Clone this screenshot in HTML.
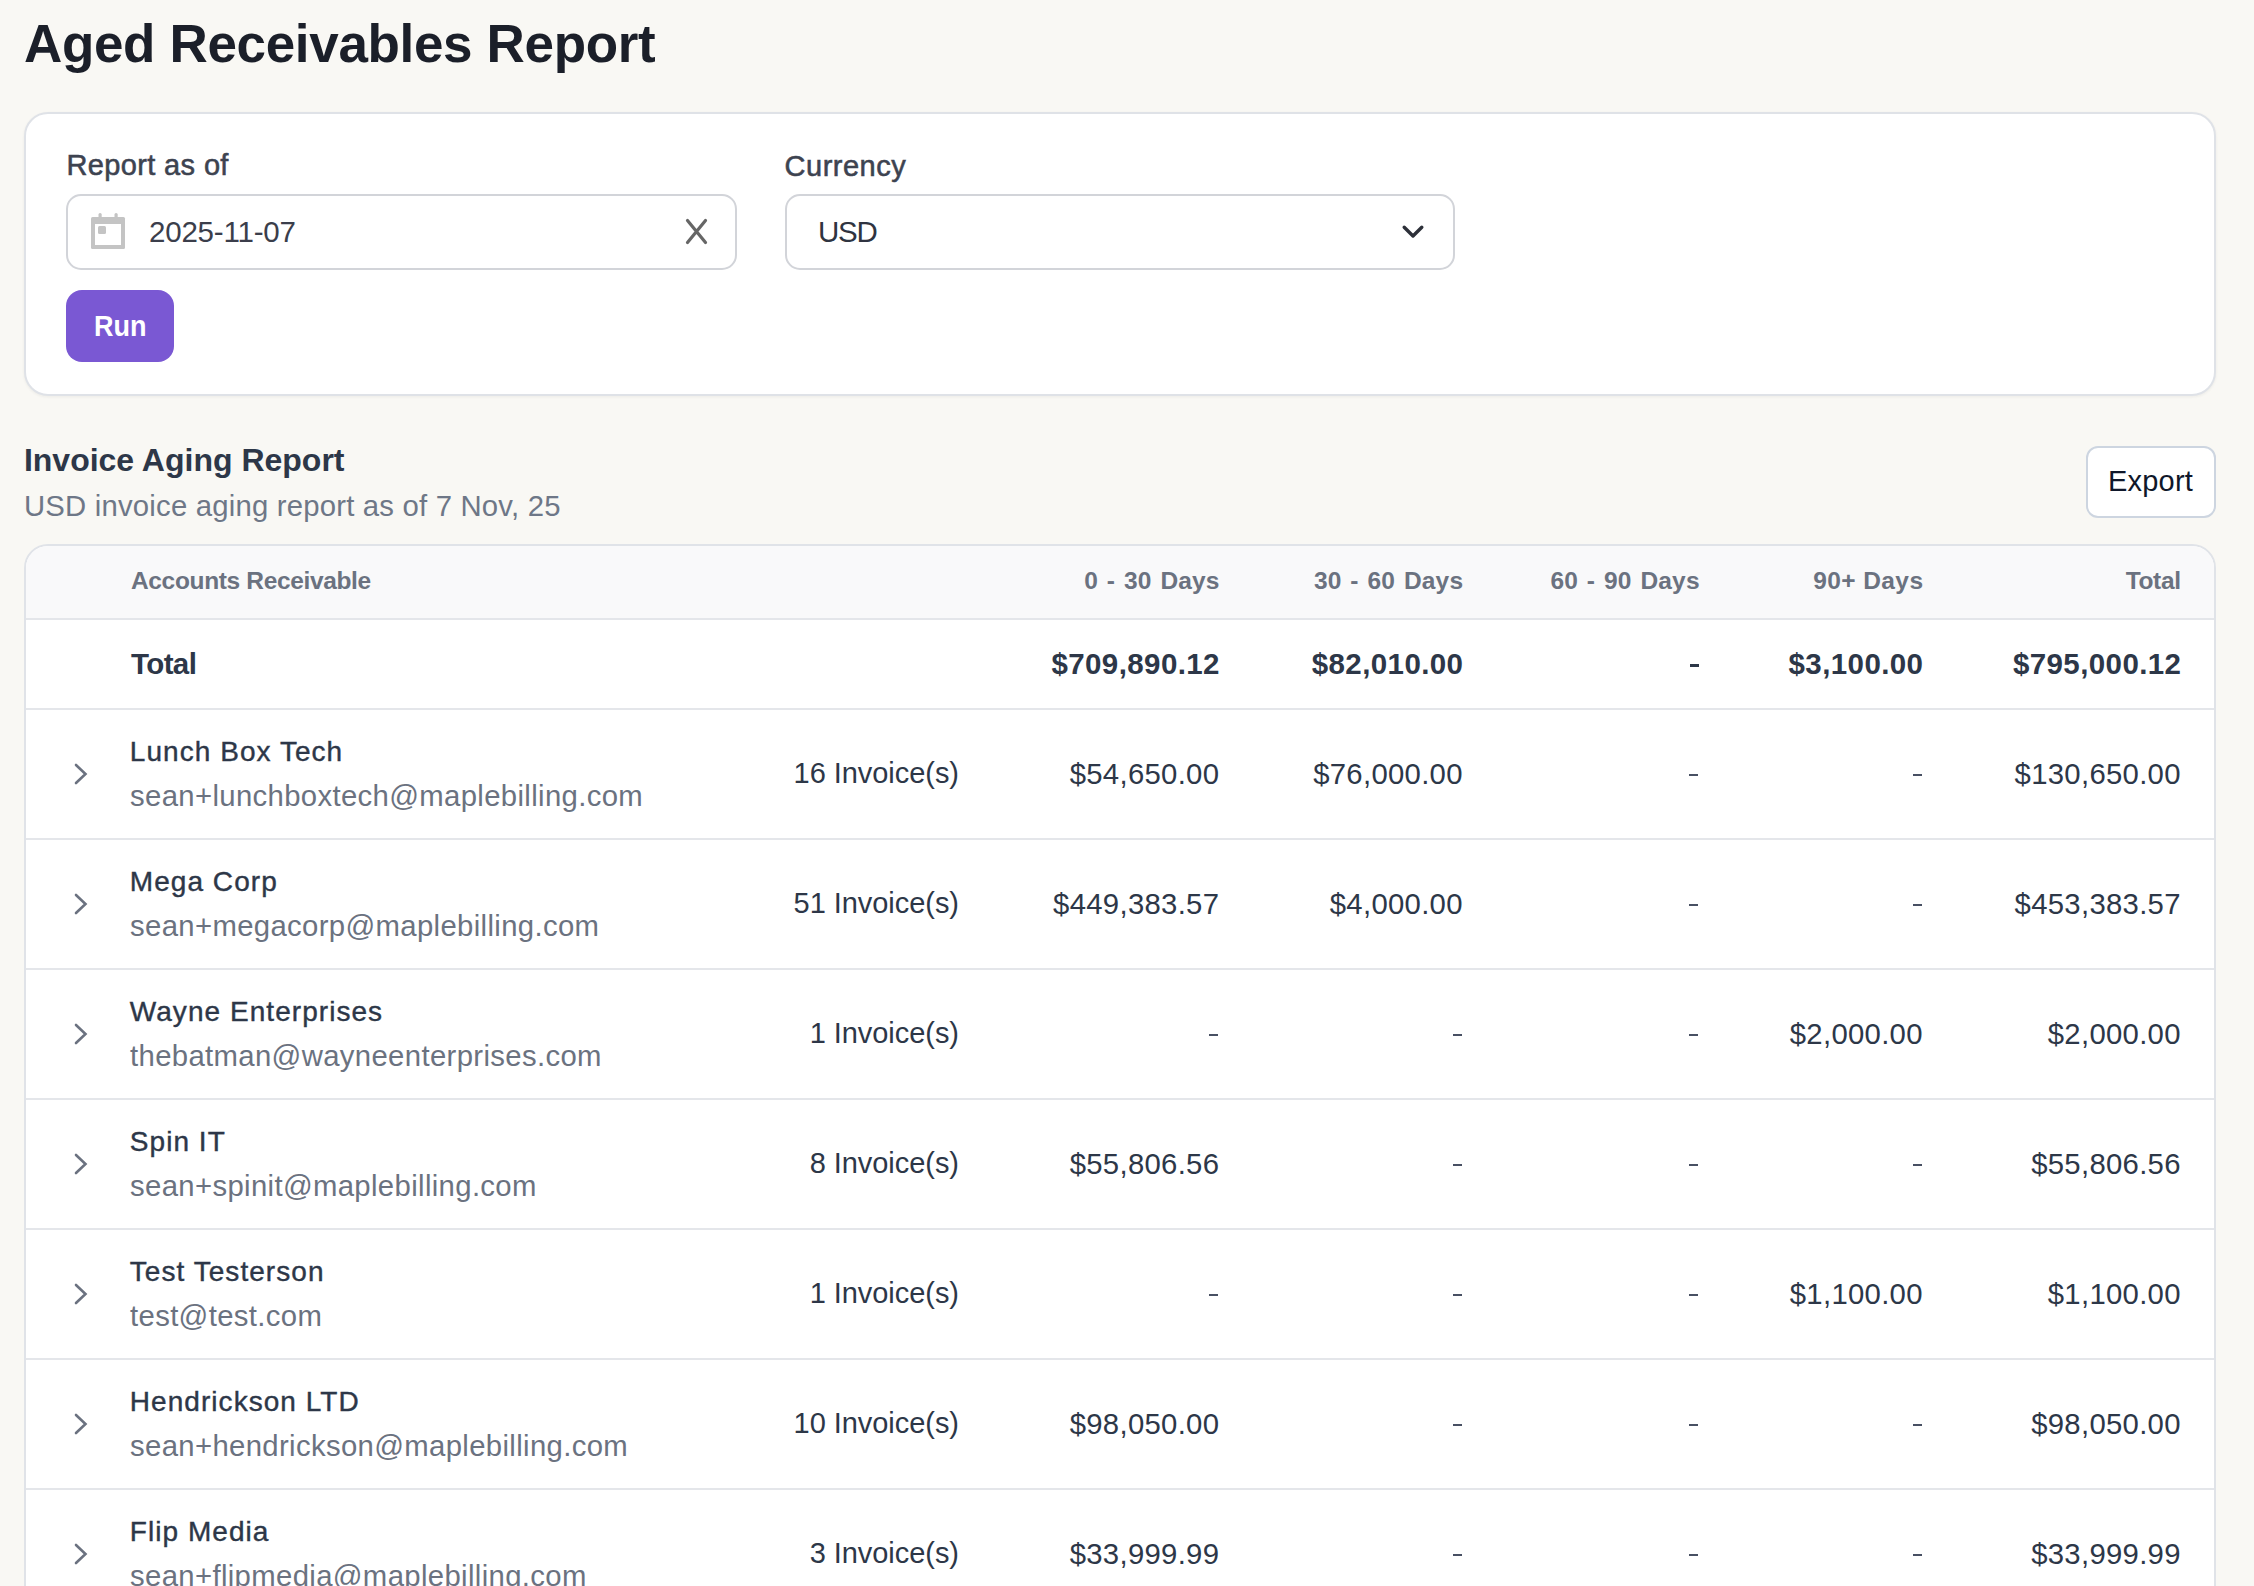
<!DOCTYPE html>
<html><head><meta charset="utf-8"><title>Aged Receivables Report</title>
<style>
html,body{margin:0;padding:0;}
body{width:2254px;height:1586px;overflow:hidden;position:relative;background:#f9f8f4;font-family:"Liberation Sans",sans-serif;}
.t{position:absolute;white-space:nowrap;line-height:1;}
.b{position:absolute;}
</style></head><body>
<div class="t" style="top:17.14px;font-size:53px;font-weight:700;color:#1b1f29;letter-spacing:-0.34px;left:24.00px;">Aged Receivables Report</div>
<div class="b" style="left:24px;top:112px;width:2192px;height:284px;background:#fff;border:2px solid #dfe2e7;border-radius:24px;box-sizing:border-box;box-shadow:0 1px 3px rgba(40,40,30,0.06);"></div>
<div class="t" style="top:151.45px;font-size:29px;font-weight:400;color:#3d4350;letter-spacing:0.37px;left:66.40px;-webkit-text-stroke:0.55px currentColor;">Report as of</div>
<div class="t" style="top:151.95px;font-size:29px;font-weight:400;color:#3d4350;letter-spacing:0.5px;left:784.60px;-webkit-text-stroke:0.55px currentColor;">Currency</div>
<div class="b" style="left:66px;top:194px;width:671px;height:76px;background:#fff;border:2px solid #d2d4d9;border-radius:15px;box-sizing:border-box;"></div>
<svg class="b" style="left:91px;top:212px" width="35" height="38" viewBox="0 0 35 38">
<rect x="0" y="5" width="34" height="32" rx="1.5" fill="#c4c4c4"/>
<rect x="4" y="12" width="26" height="21" fill="#fff"/>
<rect x="7" y="14" width="8" height="8" rx="1.5" fill="#c4c4c4"/>
<rect x="7.5" y="1.1" width="3.2" height="6" rx="1.5" fill="#c4c4c4"/>
<rect x="23.5" y="1.1" width="3.2" height="6" rx="1.5" fill="#c4c4c4"/>
</svg>
<div class="t" style="top:217.43px;font-size:29.5px;font-weight:400;color:#3b3e4b;letter-spacing:-0.2px;left:149.00px;">2025-11-07</div>
<svg class="b" style="left:682px;top:215px" width="29" height="33" viewBox="0 0 29 33">
<path d="M5.5 5.5 L23.5 27.5 M23.5 5.5 L5.5 27.5" stroke="#666" stroke-width="3.2" stroke-linecap="round" fill="none"/>
</svg>
<div class="b" style="left:785px;top:194px;width:670px;height:76px;background:#fff;border:2px solid #d2d4d9;border-radius:15px;box-sizing:border-box;"></div>
<div class="t" style="top:217.03px;font-size:29.5px;font-weight:400;color:#2f3441;letter-spacing:-1.2px;left:818.00px;">USD</div>
<svg class="b" style="left:1398px;top:221px" width="30" height="22" viewBox="0 0 30 22">
<path d="M6.2 6.2 L15 15 L23.8 6.2" stroke="#2d3039" stroke-width="3.4" stroke-linecap="round" stroke-linejoin="round" fill="none"/>
</svg>
<div class="b" style="left:66px;top:290px;width:108px;height:72px;background:#7a58d3;border-radius:16px;"></div>
<div class="t" style="top:310.91px;font-size:30px;font-weight:700;color:#fff;left:93.60px;transform:scaleX(0.9);transform-origin:0 0;">Run</div>
<div class="t" style="top:443.91px;font-size:32px;font-weight:700;color:#2d3748;left:23.90px;">Invoice Aging Report</div>
<div class="t" style="top:491.40px;font-size:29.3px;font-weight:400;color:#6e7787;letter-spacing:0.2px;left:24.00px;">USD invoice aging report as of 7 Nov, 25</div>
<div class="b" style="left:2086px;top:446px;width:130px;height:72px;background:#fff;border:2px solid #cdd5e0;border-radius:12px;box-sizing:border-box;"></div>
<div class="t" style="top:467.25px;font-size:29px;font-weight:400;color:#0f172a;letter-spacing:0.2px;left:2108.00px;">Export</div>
<div class="b" style="left:24px;top:544px;width:2192px;height:1156px;background:#fff;border:2px solid #e0e3e8;border-radius:24px;box-sizing:border-box;overflow:hidden;"></div>
<div class="b" style="left:26px;top:546px;width:2188px;height:72px;background:#f9f9fa;border-radius:22px 22px 0 0;"></div>
<div class="b" style="left:26px;top:618px;width:2188px;height:2px;background:#e4e6ea;"></div>
<div class="t" style="top:569.26px;font-size:24.5px;font-weight:700;color:#6b7280;letter-spacing:-0.35px;left:131.00px;">Accounts Receivable</div>
<div class="t" style="top:569.26px;font-size:24.5px;font-weight:700;color:#6b7280;letter-spacing:0.13px;right:1034.37px;text-align:right;word-spacing:2px;">0 - 30 Days</div>
<div class="t" style="top:569.26px;font-size:24.5px;font-weight:700;color:#6b7280;letter-spacing:0.13px;right:790.87px;text-align:right;word-spacing:2px;">30 - 60 Days</div>
<div class="t" style="top:569.26px;font-size:24.5px;font-weight:700;color:#6b7280;letter-spacing:0.13px;right:554.37px;text-align:right;word-spacing:2px;">60 - 90 Days</div>
<div class="t" style="top:569.26px;font-size:24.5px;font-weight:700;color:#6b7280;letter-spacing:0.42px;right:330.58px;text-align:right;">90+ Days</div>
<div class="t" style="top:569.26px;font-size:24.5px;font-weight:700;color:#6b7280;letter-spacing:-0.35px;right:73.35px;text-align:right;">Total</div>
<div class="t" style="top:649.43px;font-size:29.5px;font-weight:700;color:#2d3748;letter-spacing:-0.6px;left:131.00px;">Total</div>
<div class="t" style="top:649.43px;font-size:29.5px;font-weight:700;color:#2d3748;letter-spacing:0.4px;right:1034.10px;text-align:right;">$709,890.12</div>
<div class="t" style="top:649.43px;font-size:29.5px;font-weight:700;color:#2d3748;letter-spacing:0.4px;right:790.60px;text-align:right;">$82,010.00</div>
<div class="b" style="left:1689.70px;top:664.00px;width:9.1px;height:2.8px;background:#2d3748;"></div>
<div class="t" style="top:649.43px;font-size:29.5px;font-weight:700;color:#2d3748;letter-spacing:0.4px;right:330.60px;text-align:right;">$3,100.00</div>
<div class="t" style="top:649.43px;font-size:29.5px;font-weight:700;color:#2d3748;letter-spacing:0.4px;right:72.60px;text-align:right;">$795,000.12</div>
<div class="b" style="left:26px;top:708px;width:2188px;height:2px;background:#e4e6ea;"></div>
<svg class="b" style="left:70.5px;top:760.3px" width="20" height="28" viewBox="0 0 20 28">
<path d="M5 5 L14.5 14 L5 23" stroke="#6b7280" stroke-width="2.6" stroke-linecap="round" stroke-linejoin="miter" fill="none"/>
</svg>
<div class="t" style="top:738.10px;font-size:28px;font-weight:400;color:#2d3748;letter-spacing:1.05px;left:129.80px;-webkit-text-stroke:0.4px currentColor;">Lunch Box Tech</div>
<div class="t" style="top:781.10px;font-size:29.3px;font-weight:400;color:#6b7280;letter-spacing:0.35px;left:130.00px;">sean+lunchboxtech@maplebilling.com</div>
<div class="t" style="top:759.35px;font-size:29px;font-weight:400;color:#2d3748;letter-spacing:-0.05px;right:1295.05px;text-align:right;">16 Invoice(s)</div>
<div class="t" style="top:759.10px;font-size:29.3px;font-weight:400;color:#2d3748;letter-spacing:0.3px;right:1034.70px;text-align:right;">$54,650.00</div>
<div class="t" style="top:759.10px;font-size:29.3px;font-weight:400;color:#2d3748;letter-spacing:0.3px;right:791.20px;text-align:right;">$76,000.00</div>
<div class="b" style="left:1689.00px;top:773.50px;width:9px;height:2.2px;background:#485063;"></div>
<div class="b" style="left:1912.50px;top:773.50px;width:9px;height:2.2px;background:#485063;"></div>
<div class="t" style="top:759.10px;font-size:29.3px;font-weight:400;color:#2d3748;letter-spacing:0.3px;right:73.20px;text-align:right;">$130,650.00</div>
<div class="b" style="left:26px;top:838px;width:2188px;height:2px;background:#e4e6ea;"></div>
<svg class="b" style="left:70.5px;top:890.3px" width="20" height="28" viewBox="0 0 20 28">
<path d="M5 5 L14.5 14 L5 23" stroke="#6b7280" stroke-width="2.6" stroke-linecap="round" stroke-linejoin="miter" fill="none"/>
</svg>
<div class="t" style="top:868.10px;font-size:28px;font-weight:400;color:#2d3748;letter-spacing:1.05px;left:129.80px;-webkit-text-stroke:0.4px currentColor;">Mega Corp</div>
<div class="t" style="top:911.10px;font-size:29.3px;font-weight:400;color:#6b7280;letter-spacing:0.35px;left:130.00px;">sean+megacorp@maplebilling.com</div>
<div class="t" style="top:889.35px;font-size:29px;font-weight:400;color:#2d3748;letter-spacing:-0.05px;right:1295.05px;text-align:right;">51 Invoice(s)</div>
<div class="t" style="top:889.10px;font-size:29.3px;font-weight:400;color:#2d3748;letter-spacing:0.3px;right:1034.70px;text-align:right;">$449,383.57</div>
<div class="t" style="top:889.10px;font-size:29.3px;font-weight:400;color:#2d3748;letter-spacing:0.3px;right:791.20px;text-align:right;">$4,000.00</div>
<div class="b" style="left:1689.00px;top:903.50px;width:9px;height:2.2px;background:#485063;"></div>
<div class="b" style="left:1912.50px;top:903.50px;width:9px;height:2.2px;background:#485063;"></div>
<div class="t" style="top:889.10px;font-size:29.3px;font-weight:400;color:#2d3748;letter-spacing:0.3px;right:73.20px;text-align:right;">$453,383.57</div>
<div class="b" style="left:26px;top:968px;width:2188px;height:2px;background:#e4e6ea;"></div>
<svg class="b" style="left:70.5px;top:1020.3px" width="20" height="28" viewBox="0 0 20 28">
<path d="M5 5 L14.5 14 L5 23" stroke="#6b7280" stroke-width="2.6" stroke-linecap="round" stroke-linejoin="miter" fill="none"/>
</svg>
<div class="t" style="top:998.10px;font-size:28px;font-weight:400;color:#2d3748;letter-spacing:1.05px;left:129.80px;-webkit-text-stroke:0.4px currentColor;">Wayne Enterprises</div>
<div class="t" style="top:1041.10px;font-size:29.3px;font-weight:400;color:#6b7280;letter-spacing:0.35px;left:130.00px;">thebatman@wayneenterprises.com</div>
<div class="t" style="top:1019.35px;font-size:29px;font-weight:400;color:#2d3748;letter-spacing:-0.05px;right:1295.05px;text-align:right;">1 Invoice(s)</div>
<div class="b" style="left:1209.00px;top:1033.50px;width:9px;height:2.2px;background:#485063;"></div>
<div class="b" style="left:1452.50px;top:1033.50px;width:9px;height:2.2px;background:#485063;"></div>
<div class="b" style="left:1689.00px;top:1033.50px;width:9px;height:2.2px;background:#485063;"></div>
<div class="t" style="top:1019.10px;font-size:29.3px;font-weight:400;color:#2d3748;letter-spacing:0.3px;right:331.20px;text-align:right;">$2,000.00</div>
<div class="t" style="top:1019.10px;font-size:29.3px;font-weight:400;color:#2d3748;letter-spacing:0.3px;right:73.20px;text-align:right;">$2,000.00</div>
<div class="b" style="left:26px;top:1098px;width:2188px;height:2px;background:#e4e6ea;"></div>
<svg class="b" style="left:70.5px;top:1150.3px" width="20" height="28" viewBox="0 0 20 28">
<path d="M5 5 L14.5 14 L5 23" stroke="#6b7280" stroke-width="2.6" stroke-linecap="round" stroke-linejoin="miter" fill="none"/>
</svg>
<div class="t" style="top:1128.10px;font-size:28px;font-weight:400;color:#2d3748;letter-spacing:1.05px;left:129.80px;-webkit-text-stroke:0.4px currentColor;">Spin IT</div>
<div class="t" style="top:1171.10px;font-size:29.3px;font-weight:400;color:#6b7280;letter-spacing:0.35px;left:130.00px;">sean+spinit@maplebilling.com</div>
<div class="t" style="top:1149.35px;font-size:29px;font-weight:400;color:#2d3748;letter-spacing:-0.05px;right:1295.05px;text-align:right;">8 Invoice(s)</div>
<div class="t" style="top:1149.10px;font-size:29.3px;font-weight:400;color:#2d3748;letter-spacing:0.3px;right:1034.70px;text-align:right;">$55,806.56</div>
<div class="b" style="left:1452.50px;top:1163.50px;width:9px;height:2.2px;background:#485063;"></div>
<div class="b" style="left:1689.00px;top:1163.50px;width:9px;height:2.2px;background:#485063;"></div>
<div class="b" style="left:1912.50px;top:1163.50px;width:9px;height:2.2px;background:#485063;"></div>
<div class="t" style="top:1149.10px;font-size:29.3px;font-weight:400;color:#2d3748;letter-spacing:0.3px;right:73.20px;text-align:right;">$55,806.56</div>
<div class="b" style="left:26px;top:1228px;width:2188px;height:2px;background:#e4e6ea;"></div>
<svg class="b" style="left:70.5px;top:1280.3px" width="20" height="28" viewBox="0 0 20 28">
<path d="M5 5 L14.5 14 L5 23" stroke="#6b7280" stroke-width="2.6" stroke-linecap="round" stroke-linejoin="miter" fill="none"/>
</svg>
<div class="t" style="top:1258.10px;font-size:28px;font-weight:400;color:#2d3748;letter-spacing:1.05px;left:129.80px;-webkit-text-stroke:0.4px currentColor;">Test Testerson</div>
<div class="t" style="top:1301.10px;font-size:29.3px;font-weight:400;color:#6b7280;letter-spacing:0.35px;left:130.00px;">test@test.com</div>
<div class="t" style="top:1279.35px;font-size:29px;font-weight:400;color:#2d3748;letter-spacing:-0.05px;right:1295.05px;text-align:right;">1 Invoice(s)</div>
<div class="b" style="left:1209.00px;top:1293.50px;width:9px;height:2.2px;background:#485063;"></div>
<div class="b" style="left:1452.50px;top:1293.50px;width:9px;height:2.2px;background:#485063;"></div>
<div class="b" style="left:1689.00px;top:1293.50px;width:9px;height:2.2px;background:#485063;"></div>
<div class="t" style="top:1279.10px;font-size:29.3px;font-weight:400;color:#2d3748;letter-spacing:0.3px;right:331.20px;text-align:right;">$1,100.00</div>
<div class="t" style="top:1279.10px;font-size:29.3px;font-weight:400;color:#2d3748;letter-spacing:0.3px;right:73.20px;text-align:right;">$1,100.00</div>
<div class="b" style="left:26px;top:1358px;width:2188px;height:2px;background:#e4e6ea;"></div>
<svg class="b" style="left:70.5px;top:1410.3px" width="20" height="28" viewBox="0 0 20 28">
<path d="M5 5 L14.5 14 L5 23" stroke="#6b7280" stroke-width="2.6" stroke-linecap="round" stroke-linejoin="miter" fill="none"/>
</svg>
<div class="t" style="top:1388.10px;font-size:28px;font-weight:400;color:#2d3748;letter-spacing:1.05px;left:129.80px;-webkit-text-stroke:0.4px currentColor;">Hendrickson LTD</div>
<div class="t" style="top:1431.10px;font-size:29.3px;font-weight:400;color:#6b7280;letter-spacing:0.35px;left:130.00px;">sean+hendrickson@maplebilling.com</div>
<div class="t" style="top:1409.35px;font-size:29px;font-weight:400;color:#2d3748;letter-spacing:-0.05px;right:1295.05px;text-align:right;">10 Invoice(s)</div>
<div class="t" style="top:1409.10px;font-size:29.3px;font-weight:400;color:#2d3748;letter-spacing:0.3px;right:1034.70px;text-align:right;">$98,050.00</div>
<div class="b" style="left:1452.50px;top:1423.50px;width:9px;height:2.2px;background:#485063;"></div>
<div class="b" style="left:1689.00px;top:1423.50px;width:9px;height:2.2px;background:#485063;"></div>
<div class="b" style="left:1912.50px;top:1423.50px;width:9px;height:2.2px;background:#485063;"></div>
<div class="t" style="top:1409.10px;font-size:29.3px;font-weight:400;color:#2d3748;letter-spacing:0.3px;right:73.20px;text-align:right;">$98,050.00</div>
<div class="b" style="left:26px;top:1488px;width:2188px;height:2px;background:#e4e6ea;"></div>
<svg class="b" style="left:70.5px;top:1540.3px" width="20" height="28" viewBox="0 0 20 28">
<path d="M5 5 L14.5 14 L5 23" stroke="#6b7280" stroke-width="2.6" stroke-linecap="round" stroke-linejoin="miter" fill="none"/>
</svg>
<div class="t" style="top:1518.10px;font-size:28px;font-weight:400;color:#2d3748;letter-spacing:1.05px;left:129.80px;-webkit-text-stroke:0.4px currentColor;">Flip Media</div>
<div class="t" style="top:1561.10px;font-size:29.3px;font-weight:400;color:#6b7280;letter-spacing:0.35px;left:130.00px;">sean+flipmedia@maplebilling.com</div>
<div class="t" style="top:1539.35px;font-size:29px;font-weight:400;color:#2d3748;letter-spacing:-0.05px;right:1295.05px;text-align:right;">3 Invoice(s)</div>
<div class="t" style="top:1539.10px;font-size:29.3px;font-weight:400;color:#2d3748;letter-spacing:0.3px;right:1034.70px;text-align:right;">$33,999.99</div>
<div class="b" style="left:1452.50px;top:1553.50px;width:9px;height:2.2px;background:#485063;"></div>
<div class="b" style="left:1689.00px;top:1553.50px;width:9px;height:2.2px;background:#485063;"></div>
<div class="b" style="left:1912.50px;top:1553.50px;width:9px;height:2.2px;background:#485063;"></div>
<div class="t" style="top:1539.10px;font-size:29.3px;font-weight:400;color:#2d3748;letter-spacing:0.3px;right:73.20px;text-align:right;">$33,999.99</div>
</body></html>
